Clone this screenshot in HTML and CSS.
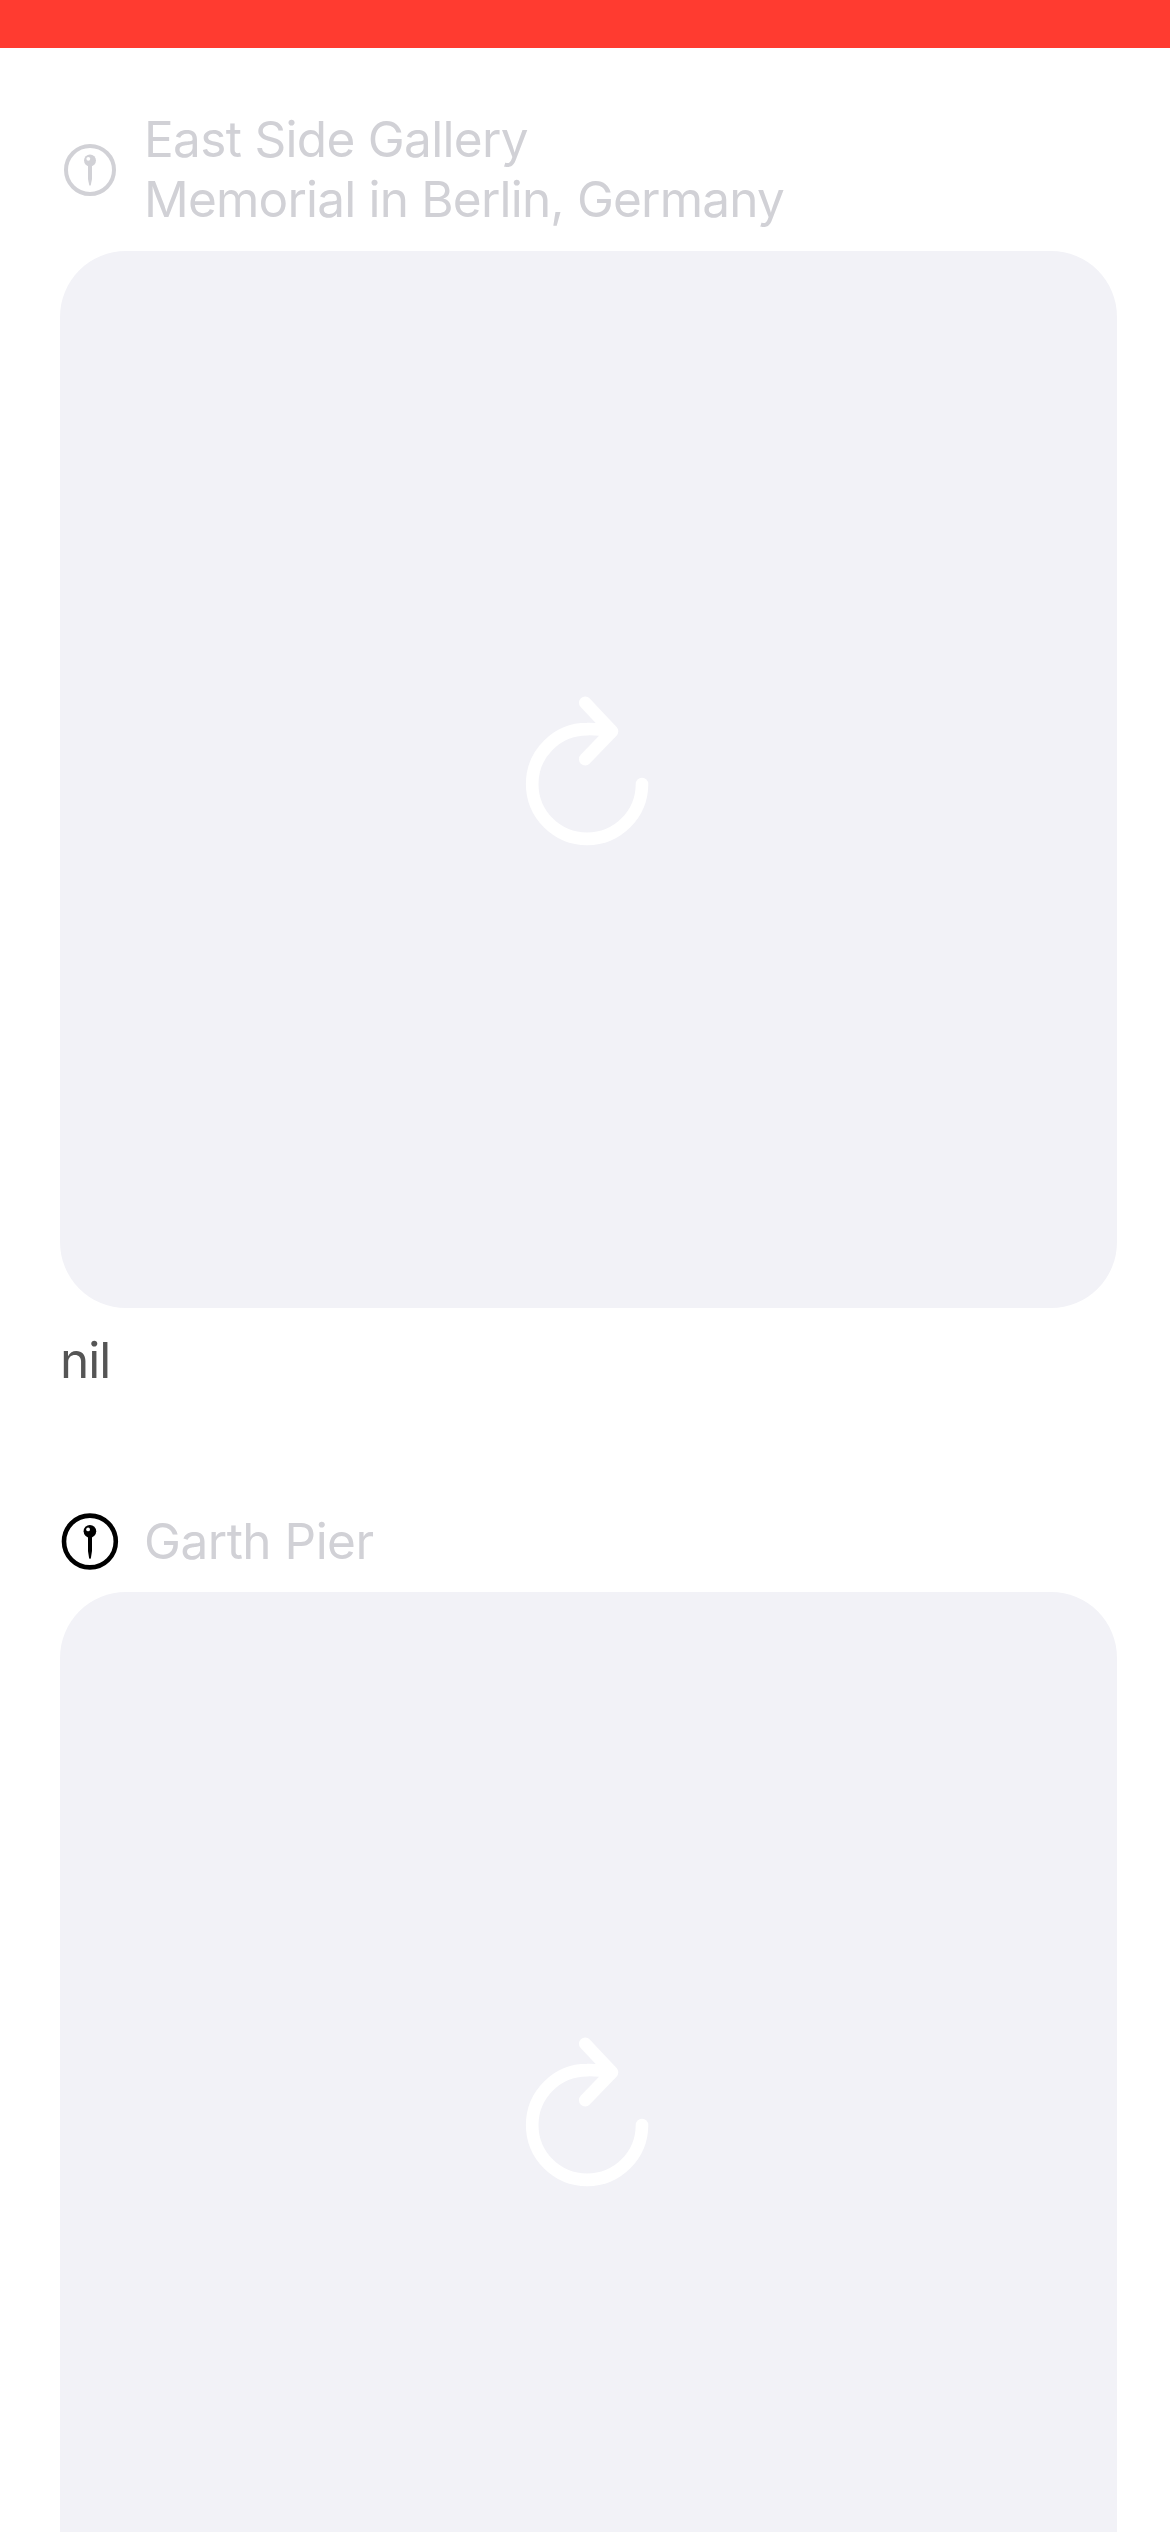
FILE: index.html
```html
<!DOCTYPE html>
<html lang="en">
<head>
<meta charset="utf-8">
<title>Places</title>
<link rel="stylesheet" href="styles.css">
</head>
<body>
<div class="status-bar"></div>
<main class="feed">
  <article class="place">
    <header class="place-header">
      <svg class="pin pin-muted" viewBox="0 0 60 60" aria-hidden="true">
        <circle cx="30" cy="31" r="24" fill="none" stroke="currentColor" stroke-width="4"/>
        <path d="M28 26h4v14l-1.2 6q-.8 1.6-1.6 0L28 40z" fill="currentColor"/>
        <circle cx="30" cy="21.5" r="6" fill="currentColor"/>
        <circle cx="28.3" cy="19.8" r="1.9" fill="#fff"/>
      </svg>
      <h2 class="place-title"><span class="line line-name">East Side Gallery</span><span class="line line-location">Memorial in Berlin, Germany</span></h2>
    </header>
    <div class="photo">
      <svg class="reload" viewBox="0 0 180 180" aria-hidden="true">
        <path d="M143 94A54.9 54.9 0 1 1 88.1 39.1Q99 38.8 112 41.3M86.2 12.8L113 41.3L86.2 69.2"/>
      </svg>
    </div>
    <p class="caption">nil</p>
  </article>
  <article class="place">
    <header class="place-header">
      <svg class="pin" viewBox="0 0 60 60" aria-hidden="true">
        <circle cx="29.9" cy="30.5" r="25.9" fill="none" stroke="currentColor" stroke-width="4.6"/>
        <path d="M28 26h4v14l-1.1 7q-.9 1.8-1.8 0L28 40z" fill="currentColor"/>
        <circle cx="29.9" cy="20.2" r="6.3" fill="currentColor"/>
        <circle cx="28.1" cy="18.4" r="1.9" fill="#fff"/>
      </svg>
      <h2 class="place-title"><span class="line line-pier">Garth Pier</span></h2>
    </header>
    <div class="photo">
      <svg class="reload" viewBox="0 0 180 180" aria-hidden="true">
        <path d="M143 94A54.9 54.9 0 1 1 88.1 39.1Q99 38.8 112 41.3M86.2 12.8L113 41.3L86.2 69.2"/>
      </svg>
    </div>
  </article>
</main>
</body>
</html>
```
FILE: styles.css
```css
* {
  box-sizing: border-box;
  margin: 0;
}

body {
  width: 1170px;
  height: 2532px;
  overflow: hidden;
  background: #fff;
  font: 400 49.5px/60px Inter, "Liberation Sans", sans-serif;
}

.status-bar {
  height: 48px;
  background: #ff3b30;
}

.feed {
  display: flex;
  flex-direction: column;
  gap: 121px;
  padding: 61px 53px 0 60px;
}

.place-header {
  display: flex;
  align-items: center;
  gap: 24px;
  margin-bottom: 22px;
}

.place + .place .place-header {
  margin-bottom: 21px;
}

.pin {
  flex: none;
  width: 60px;
  height: 60px;
  color: #000;
}

.pin-muted {
  color: #d1d1d6;
}

.place-title {
  font-size: inherit;
  font-weight: 400;
  color: #d1d1d6;
}

.line {
  display: block;
  white-space: nowrap;
}

.line-name {
  letter-spacing: -0.68px;
}

.line-location {
  letter-spacing: -0.8px;
}

.line-pier {
  letter-spacing: -0.5px;
}

.photo {
  display: flex;
  align-items: center;
  justify-content: center;
  width: 1057px;
  height: 1057px;
  border-radius: 66px;
  background: #f2f2f7;
}

.reload {
  width: 180px;
  height: 180px;
  fill: none;
  stroke: #fff;
  stroke-width: 12.6;
  stroke-linecap: round;
  stroke-linejoin: round;
}

.caption {
  margin-top: 22px;
  color: #555;
  letter-spacing: -1px;
}
```
